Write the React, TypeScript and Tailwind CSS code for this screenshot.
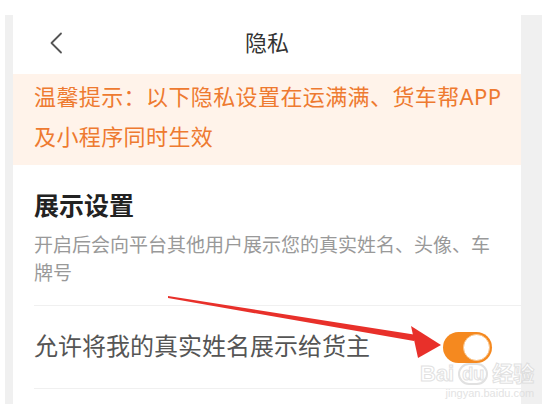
const FONT = { fontFamily: '"Noto Sans", "Noto Sans CJK SC", sans-serif' };

function Toggle() {
  return (
    <div className="relative w-[49px] h-[31px] rounded-full bg-[#f5891f] shrink-0">
      <div className="absolute right-[2px] top-[2px] w-[27px] h-[27px] rounded-full bg-white border border-[#f9c48a]" />
    </div>
  );
}

export default function App() {
  return (
    <div className="relative w-[556px] h-[404px] bg-white pt-[15px] pl-[5px] overflow-hidden" style={FONT}>
      <div className="w-[537px] h-[389px] bg-[#f0f0f0] pl-[8px] pr-[21px]">
        <div className="h-full bg-white flex flex-col">
          {/* header */}
          <div className="relative h-[59px] flex items-center justify-center">
            <svg className="absolute left-[36px] top-[17px]" width="14" height="22" viewBox="0 0 14 22" fill="none">
              <path d="M12 1.5 L2.5 11 L12 20.5" stroke="#555" strokeWidth="1.8" strokeLinecap="round" strokeLinejoin="round" />
            </svg>
            <span className="text-[22px] text-[#333] -mt-[4px]">隐私</span>
          </div>

          {/* notice */}
          <div className="bg-[#fff3ea] pl-[21px] pt-[2px] pb-[9px] text-[22px] leading-[40px] tracking-[0.4px] whitespace-nowrap text-[#ee7a30]">
            温馨提示：以下隐私设置在运满满、货车帮APP
            <br />
            及小程序同时生效
          </div>

          {/* display settings */}
          <div className="px-[21px] pt-[24px] pb-[18px]">
            <div className="text-[25px] leading-[32px] font-bold text-[#222]">展示设置</div>
            <div className="mt-[10px] text-[19px] leading-[28px] text-[#999] pr-[4px]">
              开启后会向平台其他用户展示您的真实姓名、头像、车牌号
            </div>
          </div>
          <div className="ml-[21px] h-px bg-[#f0f0f0]" />
          <div className="h-[82px] flex items-center justify-between pl-[21px] pr-[29px]">
            <span className="text-[24px] text-[#555] -mt-[2px]">允许将我的真实姓名展示给货主</span>
            <Toggle />
          </div>
          <div className="ml-[21px] h-px bg-[#f0f0f0]" />
        </div>
      </div>

      {/* red annotation arrow */}
      <svg className="absolute left-0 top-0 pointer-events-none" width="556" height="404" viewBox="0 0 556 404">
        <polygon points="168,296 417,335 414,341 168,298" fill="#e8302a" />
        <polygon points="411,326 441,345 418,358" fill="#e8302a" />
      </svg>

      {/* watermark */}
      <div className="absolute left-[420px] top-[362px] flex flex-col items-end pointer-events-none opacity-80">
        <div className="flex items-center gap-[4px] text-[22px] leading-[24px] font-bold text-white" style={{ fontFamily: '"Liberation Sans", "Noto Sans CJK SC", sans-serif', WebkitTextStroke: '1px #dadada' }}>
          <span>Bai</span>
          <span className="rounded-full border-2 border-[#dadada] px-[2px] text-[18px] leading-[18px]">du</span>
          <span className="text-[21px]">经验</span>
        </div>
        <div className="text-[11px] leading-[14px] text-[#dcdcdc]" style={{ fontFamily: '"Liberation Sans", sans-serif' }}>jingyan.baidu.com</div>
      </div>
    </div>
  );
}
